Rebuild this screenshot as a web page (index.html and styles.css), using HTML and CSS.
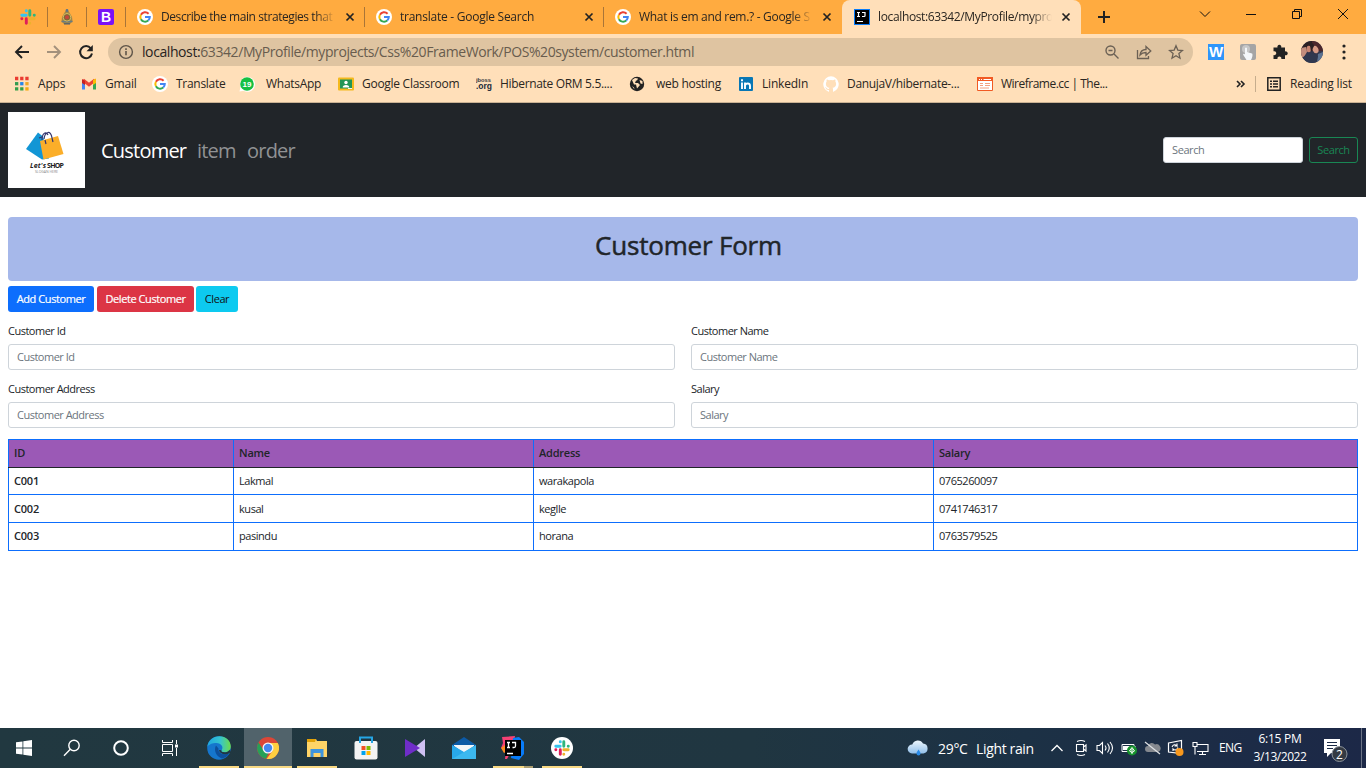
FILE: index.html
```html
<!DOCTYPE html>
<html lang="en">
<head>
<meta charset="utf-8">
<title>Customer</title>
<link rel="stylesheet" href="styles.css">
</head>
<body>
<svg class="defs" width="0" height="0">
  <defs>
    <symbol id="google" viewBox="0 0 16 16"><circle cx="8" cy="8" r="8" fill="#fff"/><path d="M3.9 5.8A4.8 4.8 0 0 1 11.6 4.7" fill="none" stroke="#ea4335" stroke-width="2"/><path d="M3.9 5.8A4.8 4.8 0 0 0 3.9 10.3" fill="none" stroke="#fbbc05" stroke-width="2"/><path d="M3.9 10.3A4.8 4.8 0 0 0 11.2 11.5" fill="none" stroke="#34a853" stroke-width="2"/><path d="M11.2 11.5A4.8 4.8 0 0 0 12.8 8H8" fill="none" stroke="#4285f4" stroke-width="2"/></symbol>
    <symbol id="slack" viewBox="0 0 16 16"><g stroke-width="2.9" stroke-linecap="round"><path d="M6.3 1.8v.1M1.8 6.3h4.4" stroke="#36c5f0"/><path d="M9.8 1.8v4.4M14.2 6.3h.1" stroke="#2eb67d"/><path d="M9.8 9.8h4.4M9.8 14.2v.1" stroke="#ecb22e"/><path d="M6.3 9.8v4.4M1.8 9.8h.1" stroke="#e01e5a"/></g></symbol>
    <symbol id="close" viewBox="0 0 10 10"><path d="M1.500 1.500l7 7M8.500 1.500l-7 7" stroke="#222" stroke-width="1.700"/></symbol>
  </defs>
</svg>

<header class="browser">
  <div class="tabs">
    <div class="pin"><svg width="16" height="16"><use href="#slack"/></svg></div>
    <div class="pin"><svg width="16" height="16" viewBox="0 0 16 16"><path d="M5 4.500L6.500 2h3L11 4.500 13 8l.5 4.500L11 15H5l-2.500-2.500L3 8z" fill="#a08747"/><path d="M2.500 12.500h11" stroke="#6b7b80" stroke-width="1.500"/><circle cx="8" cy="8.300" r="3.800" fill="#7f6a33" stroke="#d8bb60"/><circle cx="8" cy="8.300" r="2" fill="#c6463c"/><path d="M5 14.800h6" stroke="#5e6569" stroke-width="1.500"/><circle cx="8" cy="1.500" r="1.400" fill="#5e7384"/></svg></div>
    <div class="pin"><div class="boot">B</div></div>
    <div class="tab"><svg class="fav" width="16" height="16"><use href="#google"/></svg><span class="ttl t1">Describe the main strategies that</span><svg class="cl" width="10" height="10"><use href="#close"/></svg></div>
    <div class="tab"><svg class="fav" width="16" height="16"><use href="#google"/></svg><span class="ttl t2">translate - Google Search</span><svg class="cl" width="10" height="10"><use href="#close"/></svg></div>
    <div class="tab last"><svg class="fav" width="16" height="16"><use href="#google"/></svg><span class="ttl t3">What is em and rem.? - Google S</span><svg class="cl" width="10" height="10"><use href="#close"/></svg></div>
    <div class="tab active"><svg class="fav" width="16" height="16" viewBox="0 0 16 16"><path d="M0 0h16v16H0z" fill="#087cfa"/><path d="M1 1h14v14H1z" fill="#000"/><path d="M3 3.500h3M4.500 3.500v4M3 7.500h3M8 3.500h3v3.300q0 .7-.8.7H8M3 12.500h6" stroke="#fff" stroke-width="1.200" fill="none"/></svg><span class="ttl t4">localhost:63342/MyProfile/mypro</span><svg class="cl" width="10" height="10"><use href="#close"/></svg></div>
    <svg class="plus" width="14" height="14" viewBox="0 0 14 14"><path d="M7 1v12M1 7h12" stroke="#222" stroke-width="2"/></svg>
    <div class="win">
      <svg width="12" height="12" viewBox="0 0 12 12"><path d="M1 3.500l5 5 5-5" fill="none" stroke="#111"/></svg>
      <svg width="12" height="12" viewBox="0 0 12 12"><path d="M1 6.500h10" stroke="#111"/></svg>
      <svg width="12" height="12" viewBox="0 0 12 12"><path d="M1.500 3.500h7v7h-7zM3.500 3.500v-2h7v7h-2" fill="none" stroke="#111"/></svg>
      <svg width="12" height="12" viewBox="0 0 12 12"><path d="M1 1l10 10M11 1L1 11" stroke="#111"/></svg>
    </div>
  </div>
  <div class="toolbar">
    <svg width="16" height="16" viewBox="0 0 16 16"><path d="M15 8H2.500M8 2L2 8l6 6" fill="none" stroke="#222" stroke-width="1.900"/></svg>
    <svg width="16" height="16" viewBox="0 0 16 16"><path d="M1 8h12.500M8 2l6 6-6 6" fill="none" stroke="#a3917c" stroke-width="1.900"/></svg>
    <svg width="16" height="16" viewBox="0 0 16 16"><path d="M12.800 4.300A6 6 0 1 0 14 9.500" fill="none" stroke="#222" stroke-width="2"/><path d="M14.800 1v6.300H8.500z" fill="#222"/></svg>
    <div class="url">
      <svg width="16" height="16" viewBox="0 0 16 16"><circle cx="8" cy="8" r="6.400" fill="none" stroke="#5f5549" stroke-width="1.400"/><path d="M8 7v4.300M8 4.300v1.600" stroke="#5f5549" stroke-width="1.600"/></svg>
      <span class="addr"><b>localhost:</b>63342/MyProfile/myprojects/Css%20FrameWork/POS%20system/customer.html</span>
      <svg width="16" height="16" viewBox="0 0 16 16"><g fill="none" stroke="#6b6054" stroke-width="1.400"><circle cx="6.500" cy="6.500" r="4.500"/><path d="M10 10l4.500 4.500M4.500 6.500h4"/></g></svg>
      <svg width="16" height="16" viewBox="0 0 16 16"><g fill="none" stroke="#6b6054" stroke-width="1.300"><path d="M1.500 6v8.500h11V12"/><path d="M4 11c.5-4 2.800-5.500 6-5.500V2.500L14.800 7 10 11.300V8.500c-2.500 0-4.300.5-6 2.500z"/></g></svg>
      <svg width="16" height="16" viewBox="0 0 16 16"><path d="M8 1.800l1.800 4.300 4.700.4-3.600 3.100 1.100 4.600L8 11.700l-4 2.500 1.100-4.600-3.600-3.100 4.700-.4z" fill="none" stroke="#6b6054" stroke-width="1.300"/></svg>
    </div>
    <div class="ext">
      <span class="wbox">W</span>
      <svg width="16" height="16" viewBox="0 0 16 16"><rect width="16" height="16" rx="2" fill="#a5a5a5"/><circle cx="6" cy="5" r="4" fill="#c7c7c7"/><path d="M5 4q1-1 2 0v4l5 1.500c1 .5.500 4-1 6.500H6.500L3 10.500l1-1 1 1z" fill="#f4f7fa"/></svg>
      <svg width="16" height="16" viewBox="0 0 16 16"><path d="M1.500 3.500h4a2 2 0 1 1 3.700 0h3.800v4a2 2 0 1 1 0 3.700v3.800H9.300a2 2 0 1 0-3.800 0h-4v-4a2 2 0 1 0 0-3.700z" fill="#222"/></svg>
      <svg width="22" height="22" viewBox="0 0 22 22"><clipPath id="av"><circle cx="11" cy="11" r="11"/></clipPath><g clip-path="url(#av)"><path d="M0 0h22v22H0z" fill="#35364b"/><path d="M0 0h12v8H0z" fill="#2b2023"/><path d="M11 0h11v10H11z" fill="#4b272c"/><path d="M0 7l5-1 1 5-3 5H0z" fill="#c48d7c"/><ellipse cx="14.500" cy="8.500" rx="2.800" ry="3.800" fill="#d69a85" transform="rotate(-25 14.500 8.500)"/><ellipse cx="7.800" cy="8" rx="2.300" ry="3.200" fill="#c98470"/><path d="M9 4l3-2 1 3-3 6z" fill="#2b2023"/><path d="M17 13l5-2v11h-6z" fill="#5c7392"/><path d="M1 17l5-4 5-1 6 3-2 7H6z" fill="#30384f"/></g></svg>
      <svg width="4" height="16" viewBox="0 0 4 16"><path d="M2 2v.01M2 8v.01M2 14v.01" stroke="#222" stroke-width="3.200" stroke-linecap="round"/></svg>
    </div>
  </div>
  <div class="marks">
    <div class="mk" style="width:67px"><svg width="16" height="16" viewBox="0 0 16 16"><g stroke-width="3.300" stroke-dasharray="3.300 1.850"><path d="M1 2.500h13.700" stroke="#ea3b31"/><path d="M1 7.700h3.300" stroke="#349b50"/><path d="M6.150 7.700h3.300" stroke="#2585ec"/><path d="M11.300 7.700h3.300" stroke="#f2a623"/><path d="M1 12.900h8.500" stroke="#34a049"/><path d="M11.300 12.900h3.300" stroke="#f6a912"/></g></svg><span>Apps</span></div>
    <div class="mk" style="width:71px"><svg width="16" height="16" viewBox="0 0 16 16"><path d="M2.500 13.500V4" stroke="#4285f4" stroke-width="3"/><path d="M13.500 13.500V6" stroke="#34a853" stroke-width="3"/><path d="M2 4l6 4.800L14 4" fill="none" stroke="#ea4335" stroke-width="3.200"/><path d="M12 4l3-1.500V7l-3 2z" fill="#fbbc04"/><path d="M1 3l3 2v4L1 7z" fill="#c5221f"/></svg><span>Gmail</span></div>
    <div class="mk" style="width:87px"><svg width="16" height="16"><use href="#google"/></svg><span class="tr">Translate</span></div>
    <div class="mk wa" style="width:99px"><svg width="16" height="16" viewBox="0 0 16 16"><path d="M.5 15.500l1-4.500A7.500 7.500 0 1 1 4.600 14.700z" fill="#fff"/><circle cx="8" cy="8" r="6.800" fill="#15c043"/><text x="8" y="11" text-anchor="middle" class="n19">19</text></svg><span>WhatsApp</span></div>
    <div class="mk" style="width:138px"><svg width="16" height="16" viewBox="0 0 16 16"><rect y="1.500" width="16" height="13" rx="1" fill="#f4b91d"/><path d="M2 3.500h12v9H2z" fill="#219557"/><circle cx="8" cy="6.500" r="1.700" fill="#fff"/><path d="M4.700 11.500q0-2.600 3.300-2.600t3.300 2.600z" fill="#fff"/><path d="M10 12h4v1h-4z" fill="#f4f4f4"/></svg><span class="cr">Google Classroom</span></div>
    <div class="mk" style="width:153px"><svg width="16" height="16" viewBox="0 0 16 16"><text x="0" y="5.500" class="jb1" textLength="15" lengthAdjust="spacingAndGlyphs">jboss</text><text x="0" y="13" class="jb2" textLength="16" lengthAdjust="spacingAndGlyphs">.org</text></svg><span class="hib">Hibernate ORM 5.5....</span></div>
    <div class="mk web" style="width:110px"><svg width="16" height="16" viewBox="0 0 16 16"><circle cx="8" cy="8" r="7.200" fill="#222"/><path d="M3 4l3-2 3 .5-1 2H7l-1 2.500h3l2 2-3 3.500-1-4H5zM10.500 4l3 1v3l-2-.5zM3 10l2 1.500.5 2z" fill="#ffdfb9"/></svg><span>web hosting</span></div>
    <div class="mk li" style="width:84px"><svg width="14" height="14" viewBox="0 0 14 14"><rect width="14" height="14" rx="1" fill="#0877b5"/><path d="M3 5.500V12M3 2.300v2M6 12V5.500M6 8.500Q6.500 6.500 8.700 6.500T11 8.800V12" stroke="#fff" stroke-width="1.900" fill="none"/></svg><span>LinkedIn</span></div>
    <div class="mk" style="width:154px"><svg width="16" height="16" viewBox="0 0 16 16"><path d="M8 .3a8 8 0 0 0-2.500 15.500c.4.1.5-.2.5-.4v-1.500c-2.200.5-2.700-.9-2.700-.9-.5-1-1-1.300-1-1.300-.7-.5.1-.5.1-.5.800.1 1.300.9 1.300.9.700 1.200 1.900.9 2.300.7 0-.5.300-.9.500-1.100-1.800-.2-3.600-.9-3.600-4 0-.9.300-1.600.8-2.100-.1-.2-.4-1 .1-2.100 0 0 .7-.2 2.200.8a7.500 7.500 0 0 1 4 0c1.500-1 2.200-.8 2.200-.8.500 1.100.2 1.900.1 2.100.5.500.8 1.200.8 2.100 0 3.100-1.800 3.800-3.600 4 .3.200.5.700.5 1.500v2.200c0 .2.100.5.500.4A8 8 0 0 0 8 .3z" fill="#fff"/></svg><span class="dan">DanujaV/hibernate-...</span></div>
    <div class="mk" style="width:200px"><svg width="16" height="16" viewBox="0 0 16 16"><path d="M.5 1.500h15v13H.5z" fill="#fff" stroke="#f15a24"/><path d="M0 1h16v4H0z" fill="#f15a24"/><path d="M2 3.500h1M4 3.500h1M6.500 3.500H14" stroke="#fff"/><path d="M3 7.500h3M3 9.500h3M3 12h9M8 7.500h5M8 9.500h5" stroke="#f3a181"/></svg><span class="wf">Wireframe.cc | The...</span></div>
    <div class="right"><svg width="10" height="8" viewBox="0 0 10 8"><path d="M1 1l3 3-3 3M5 1l3 3-3 3" fill="none" stroke="#222" stroke-width="1.600"/></svg><i></i><svg width="14" height="14" viewBox="0 0 14 14"><path d="M.8.8h12.400v12.400H.8z" fill="none" stroke="#222" stroke-width="1.500"/><path d="M3 4.300h2M6 4.300h5M3 7h2M6 7h5M3 9.700h2M6 9.700h5" stroke="#222" stroke-width="1.400"/></svg><span>Reading list</span></div>
  </div>
</header>

<nav class="navbar">
  <svg class="logo" width="77" height="76" viewBox="0 0 77 76"><path d="M0 0h77v76H0z" fill="#fff"/><path d="M30 20.500l5 4 6 22-7 1-16-10.500z" fill="#1296d5"/><path d="M32 29l18-5 5.500 18-20 5.500z" fill="#fbae29"/><path d="M34 28c0-7 4-9 6-5M36 27c1-8 7-9 8-1" fill="none" stroke="#34366f" stroke-width="1.200"/><path d="M31 26l3-1M37 28l1 4M44 26l1 4" stroke="#34366f" stroke-width="1.200"/><text x="22" y="56" class="lg1" textLength="16">Let's</text><text x="39" y="56" class="lg2" textLength="17">SHOP</text><text x="27" y="60.500" class="lg3" textLength="23">SLOGAN HERE</text></svg>
  <a class="on">Customer</a><a class="it">item</a><a class="or">order</a>
  <input class="ctl srch" placeholder="Search"><button class="btn out">Search</button>
</nav>

<main class="page">
  <h2 class="banner"><span>Customer Form</span></h2>
  <div class="btns"><button class="btn add">Add Customer</button><button class="btn del">Delete Customer</button><button class="btn clr">Clear</button></div>
  <form class="grid">
    <label>Customer Id<input class="ctl" placeholder="Customer Id"></label>
    <label>Customer Name<input class="ctl" placeholder="Customer Name"></label>
    <label>Customer Address<input class="ctl" placeholder="Customer Address"></label>
    <label>Salary<input class="ctl" placeholder="Salary"></label>
  </form>
  <table>
    <colgroup><col class="c1"><col class="c2"><col class="c3"><col></colgroup>
    <thead><tr><th>ID</th><th>Name</th><th>Address</th><th>Salary</th></tr></thead>
    <tbody>
      <tr class="short"><th>C001</th><td>Lakmal</td><td>warakapola</td><td>0765260097</td></tr>
      <tr><th>C002</th><td>kusal</td><td>keglle</td><td>0741746317</td></tr>
      <tr class="end"><th>C003</th><td>pasindu</td><td>horana</td><td>0763579525</td></tr>
    </tbody>
  </table>
</main>

<footer class="taskbar">
  <div class="sys">
    <svg width="16" height="16" viewBox="0 0 16 16"><path d="M0 2.300l6.500-.9v6.200H0zM7.300 1.300L16 0v7.600H7.300zM0 8.400h6.500v6.200L0 13.700zM7.300 8.400H16V16l-8.700-1.300z" fill="#fff"/></svg>
    <svg width="18" height="18" viewBox="0 0 18 18"><circle cx="11" cy="6.500" r="5.200" fill="none" stroke="#fff" stroke-width="1.400"/><path d="M7.300 10.300L1 16.700" stroke="#fff" stroke-width="1.400"/></svg>
    <svg width="18" height="18" viewBox="0 0 18 18"><circle cx="9" cy="9" r="6.800" fill="none" stroke="#fff" stroke-width="2"/></svg>
    <svg width="18" height="18" viewBox="0 0 18 18"><path d="M1.500 5.500h10v7h-10zM1.500 1v2.500h10V1M1.500 17v-2.500h10V17M15.500 1v4M15.500 9v8" fill="none" stroke="#fff"/><path d="M14 5.500h3v3h-3z" fill="#fff"/></svg>
  </div>
  <div class="apps">
    <div class="app run"><svg width="24" height="24" viewBox="0 0 24 24"><defs><linearGradient id="eg" x1="0" x2="1"><stop offset="0" stop-color="#1fa6e0"/><stop offset=".55" stop-color="#35c4cf"/><stop offset="1" stop-color="#6ddc4a"/></linearGradient></defs><circle cx="12" cy="12" r="11.800" fill="#1576cd"/><path d="M.3 11C1 4.500 6 .2 12.500.2c6.500 0 11.300 4.800 11.300 10.100 0 4-3 6-6.300 6-2.500 0-3.600-1-3-2 2.500-3.300-.5-7.300-5-7.300C5.500 7 1.500 8.500.3 11z" fill="url(#eg)"/><path d="M9 9.500c-2.500 4.500 0 11 6 13 3-.5 6-2.500 7.500-5.500-5 3-12 .5-11-4.500z" fill="#0d4f9c"/><path d="M14.500 14.300c-.6 1 .5 2 3 2 2 0 4-.9 5.300-2.600l.8 2.300-1.100 1c-4 2.500-10 1-10.500-3z" fill="#213841"/></svg></div>
    <div class="app run cur"><svg width="22" height="22" viewBox="0 0 22 22"><circle cx="11" cy="11" r="11" fill="#dc4637"/><path d="M1.500 5.500L7 14l5 1-3 6.800A11 11 0 0 1 1.500 5.500z" fill="#27a058"/><path d="M11 6h9.800A11 11 0 0 1 9.500 21.900L15.500 14z" fill="#ffcf40"/><circle cx="11" cy="11" r="5.500" fill="#f6f6f6"/><circle cx="11" cy="11" r="4.200" fill="#4587f0"/></svg></div>
    <div class="app run"><svg width="22" height="20" viewBox="0 0 22 20"><path d="M1 1h9l1 2h10v16H1z" fill="#ffd467"/><path d="M1 1h9l-1 3H1z" fill="#e3a208"/><path d="M4.500 19v-8h13v8h-3v-4h-7v4z" fill="#3d94dd"/></svg></div>
    <div class="app"><svg width="24" height="24" viewBox="0 0 24 24"><rect x=".5" y="5" width="23" height="18.500" rx="2" fill="#f3f3f3"/><path d="M6 7V1.500h12V7" fill="none" stroke="#25a6e5" stroke-width="2"/><path d="M7.500 10h4v4h-4z" fill="#f25022"/><path d="M12.500 10h4v4h-4z" fill="#7fba00"/><path d="M7.500 15h4v4h-4z" fill="#00a4ef"/><path d="M12.500 15h4v4h-4z" fill="#ffb900"/></svg></div>
    <div class="app"><svg width="22" height="20" viewBox="0 0 22 20"><path d="M21 1v18L10 10z" fill="#cfc0f3"/><path d="M1 1l15 9L1 19z" fill="#6f2dc9"/></svg></div>
    <div class="app"><svg width="24" height="24" viewBox="0 0 24 24"><path d="M0 9l12-8 12 8v5H0z" fill="#0c5aa6"/><path d="M2 9h20v1l-10 7L2 10z" fill="#f2f5f8"/><path d="M0 9l12 7 12-7v14H0z" fill="#28a8ea"/><path d="M0 23l24-14v14z" fill="#50c7f3" opacity=".5"/></svg></div>
    <div class="app run ij"><svg width="24" height="24" viewBox="0 0 24 24"><path d="M1 1l13-1-2 12-6 11H4l1-8-5-3 2-5z" fill="#f64174"/><path d="M0 12l4-3 3 6-4 2z" fill="#fc8b21"/><path d="M12 2l6-1 5 5v12l-5 6-8-2z" fill="#087cfa"/><path d="M4 4h16v16H4z" fill="#000"/><path d="M6 6.500h3M7.500 6.500v5M6 11.500h3M11 6.500h3.500V10q0 1.500-1.500 1.500h-1.500M6 17.500h6" stroke="#fff" stroke-width="1.300" fill="none"/></svg></div>
    <div class="app run"><svg width="22" height="22" viewBox="0 0 22 22"><circle cx="11" cy="11" r="11" fill="#fff"/><svg x="3" y="3" width="16" height="16"><use href="#slack"/></svg></svg></div>
  </div>
  <div class="tray">
    <svg class="cloud" width="22" height="18" viewBox="0 0 22 18"><defs><linearGradient id="cg" y2="1" x2="0"><stop stop-color="#edf6fc"/><stop offset="1" stop-color="#91bfe9"/></linearGradient></defs><path d="M5 14.500a4.500 4.500 0 0 1 .3-9A5.800 5.800 0 0 1 16 4.600a5 5 0 0 1 .5 9.900z" fill="url(#cg)"/><path d="M11.500 10.500c1.500 2.300 2 3.200 2 4a2 2 0 0 1-4 0c0-.8.5-1.700 2-4z" fill="#298be8"/></svg>
    <span class="deg">29°C</span><span class="rain">Light rain</span>
    <svg class="up" width="14" height="10" viewBox="0 0 14 10"><path d="M1.500 8L7 2.500 12.500 8" fill="none" stroke="#fff" stroke-width="1.300"/></svg>
    <svg class="cam" width="14" height="18" viewBox="0 0 14 18"><path d="M2.500 5.500h7v7h-7zM9.500 8l2.500-2v6l-2.500-2M3 2.500q4-2 8 0M3 15.500q4 2 8 0" fill="none" stroke="#fff" stroke-width="1.100"/></svg>
    <svg class="vol" width="18" height="16" viewBox="0 0 18 16"><path d="M1 5.500h2.500l3-3v11l-3-3H1zM9 5.500q2 2.500 0 5M11.500 3.500q3.500 4.500 0 9M14 2q5 6 0 12" fill="none" stroke="#fff" stroke-width="1.100"/></svg>
    <svg class="bat" width="17" height="16" viewBox="0 0 17 16"><path d="M1 4.500h12v7H1zM14 6v4" fill="none" stroke="#fff"/><path d="M2 6h8v4H2z" fill="#fff"/><circle cx="11" cy="10.500" r="5" fill="#16922c"/><path d="M8.500 11l2.500-3.500 2.500 3.500q-2.500 3-5 0M11 9v5" fill="none" stroke="#fff"/></svg>
    <svg class="off" width="17" height="16" viewBox="0 0 17 16"><path d="M4 12a3 3 0 0 1 0-6 4 4 0 0 1 7-1.500 4 4 0 0 1 3 7.500z" fill="#85898f"/><path d="M1 2l15 12" stroke="#dfe2e5" stroke-width="1.200"/></svg>
    <svg class="upd" width="18" height="18" viewBox="0 0 18 18"><path d="M1.500 4l13-2.500v13l-13-1.500z" fill="none" stroke="#fff" stroke-width="1.200"/><path d="M5 8q2-4 5-1V4.500M10 7H7.500M11 8.500q-2 4-5 1.500V12" fill="none" stroke="#fff" stroke-width="1.100"/><circle cx="12.500" cy="13" r="4" fill="#f8981d"/></svg>
    <svg class="net" width="17" height="16" viewBox="0 0 17 16"><path d="M5 4.500h11v7H5M10.500 12v2.500M7 14.500h7M1 2.500h4v4H1zM3 6.500v8" fill="none" stroke="#fff" stroke-width="1.100"/></svg>
    <span class="eng">ENG</span>
    <div class="clock"><span>6:15 PM</span><span class="date">3/13/2022</span></div>
    <svg class="note" width="26" height="26" viewBox="0 0 26 26"><path d="M1 1h16v14H8l-4 4v-4H1z" fill="#fff"/><path d="M4 4.500h10M4 7.500h10M4 10.500h6" stroke="#1b2b47" stroke-width="1.100"/><circle cx="16.500" cy="16" r="7.500" fill="#343a43" stroke="#8d949c"/><text x="16.500" y="20.500" text-anchor="middle" class="n2">2</text></svg>
    <i class="edge"></i>
  </div>
</footer>
</body>
</html>
```
FILE: styles.css
```css
*{box-sizing:border-box}
body{margin:0;width:1366px;height:768px;overflow:hidden;display:flex;flex-direction:column;background:#fff;color:#212529;font:12px/16px "Open Sans","Noto Sans",sans-serif}
svg{display:block;flex:none}
.defs{position:absolute}
span,a,button,label,b{white-space:nowrap}
.browser{height:103px;background:#ffdfb9;border-bottom:1px solid #c9b193;color:#2a2621}
.tabs{height:34px;display:flex;align-items:center;background:#ffab40;padding-left:9px}
.pin{width:39px;height:20px;border-right:1px solid #a97538;display:flex;align-items:center;justify-content:center}
.boot{width:16px;height:16px;border-radius:2px;background:#7a12f7;color:#fff;font:700 14px/16px "Liberation Sans",sans-serif;text-align:center}
.tab{flex:none;width:239px;height:20px;border-right:1px solid #a97538;display:flex;align-items:center;padding:0 9px 0 11px}
.tab .ttl{width:175px;margin:0 9px 0 8px;overflow:hidden;letter-spacing:-.25px;mask-image:linear-gradient(90deg,#000 88%,transparent)}
.tab .t1{letter-spacing:-.42px}
.tab .t3{letter-spacing:-.3px;width:174px}
.tab .t4{letter-spacing:-.36px;width:174px}
.tab.last{border:0;width:238px}
.tab.active{height:34px;border:0;background:#ffdfb9;border-radius:8px 8px 0 0;padding-left:12px}
.plus{margin-left:16px}
.win{display:flex;gap:34px;margin:-6px 0 0 auto;padding-right:17px}
.toolbar{height:36px;display:flex;align-items:center;padding:0 0 0 14px}
.toolbar>svg{margin-right:16px}
.url{width:1085px;height:28px;border-radius:14px;background:#dfc4a1;display:flex;align-items:center;gap:16px;padding:0 9px 0 10px;margin-left:-2px}
.addr{flex:1;margin-left:-8px;font-size:14px;letter-spacing:-.41px;color:#685c4e}
.addr b{font-weight:400;color:#28231e}
.ext{display:flex;align-items:center;gap:16px;margin-left:15px}
.ext svg:nth-child(4){margin-left:-3px}
.ext svg:nth-child(5){margin-left:3px}
.wbox{width:16px;height:16px;background:#2f95fa;color:#fff;font:700 15px/16px "Liberation Sans",sans-serif;text-align:center;overflow:hidden}
.marks{height:28px;display:flex;align-items:center;padding-left:14px}
.mk{display:flex;align-items:center;flex:none;gap:8px;letter-spacing:-.2px}
.mk span{margin-top:-1px}
.wa,.web{gap:11px}
.li{gap:9px}
.tr,.wa,.cr,.web{letter-spacing:-.28px}
.hib{letter-spacing:-.33px}
.dan{letter-spacing:-.32px}
.wf{letter-spacing:-.5px}
.n19{font:700 8px "Liberation Sans",sans-serif;fill:#fff;letter-spacing:0}
.jb1{font:700 6px "Liberation Sans",sans-serif;fill:#35383c;letter-spacing:0}
.jb2{font:700 9px "Liberation Sans",sans-serif;fill:#202a39;letter-spacing:0}
.right{display:flex;align-items:center;margin-left:59px;letter-spacing:-.2px}
.right i{width:1px;height:16px;background:#c6ad8d;margin:0 11px 0 9px}
.right span{margin:-1px 0 0 9px}
.navbar{height:94px;background:#212529;display:flex;align-items:center;padding:0 8px}
.navbar a{font-size:20px;line-height:28px;padding-top:2px;letter-spacing:-.78px;color:#909294;margin-right:11px}
.navbar .on{color:#fff;margin-left:16px;width:85px}
.navbar .it{width:39px}
.navbar .or{width:48px}
.lg1{font:italic 700 7px "Open Sans",sans-serif;fill:#222}
.lg2{font:700 7px "Open Sans",sans-serif;fill:#222}
.lg3{font:3.500px "Open Sans",sans-serif;fill:#888}
.ctl{display:block;width:100%;height:26px;border:1px solid #ced4da;border-radius:3px;padding:0 8px 2px;background:#fff;font:11px/16px "Open Sans",sans-serif;letter-spacing:-.5px;color:#212529}
.ctl::placeholder{color:#6c757d;opacity:1}
.srch{width:140px;margin:0 6px 0 auto;letter-spacing:-.4px}
.btn{height:26px;border:0;border-radius:3px;padding:0;font:11px/16px "Open Sans",sans-serif;letter-spacing:-.42px;color:#fff;text-align:center}
.out{width:49px;background:transparent;border:1px solid #198754;color:#198754}
.page{padding:20px 8px 0;height:531px}
.banner{height:64px;margin:0;border-radius:4px;background:#a6b8ea;text-align:center;font-size:26px;font-weight:400;line-height:57px;padding-left:11px;letter-spacing:-.2px;-webkit-text-stroke:.5px #212529}
.btns{display:flex;margin-top:5px}
.add,.del{-webkit-text-stroke:.2px #fff}
.add{width:86px;background:#0d6efd;margin-right:3px}
.del{width:97px;background:#dc3545;margin-right:2px}
.clr{width:42px;background:#0dcaf0;color:#111}
.grid{display:grid;grid-template-columns:1fr 1fr;gap:8px 16px;margin-top:8px}
.grid label{height:50px;font-size:11px;line-height:22px;letter-spacing:-.5px}
.grid .ctl{margin-top:2px}
table{width:1350px;margin-top:11px;border-collapse:collapse;table-layout:fixed;font-size:11px;line-height:16px;letter-spacing:-.45px}
.c1{width:225px}.c2{width:300px}.c3{width:400px}
th,td{height:28px;padding:0 5px;text-align:left;border:1px solid #0d6efd}
.short>*{height:27px}
thead th,.end>*{padding-bottom:2px}
thead th{background:#9b59b6;border-bottom-color:#212529;height:28px}
th{font-weight:600;letter-spacing:-.22px}
.taskbar{height:40px;display:flex;color:#fff;background:linear-gradient(90deg,#213840,#203641 55%,#1c3145 75%,#1c2847)}
.sys{display:flex;width:195px;align-items:center;padding-right:1px}
.sys svg{margin:auto}
.apps{display:flex;gap:1px}
.app{width:48px;height:40px;display:flex;align-items:center;justify-content:center}
.run{background:linear-gradient(#f8d983,#f8d983) center bottom/40px 2px no-repeat}
.cur{background:linear-gradient(#f8d983,#f8d983) center bottom/48px 2px no-repeat,#51636b}
.ij{background:linear-gradient(90deg,#f8d983 31px,#ac9e70 31px) center bottom/40px 2px no-repeat}
.tray{display:flex;align-items:center;margin-left:auto;width:459px}
.deg{font-size:14px;margin:2px 0 0 9px;width:38px;letter-spacing:-.3px}
.rain{font-size:14px;margin-top:2px;width:68px;letter-spacing:-.35px}
.up{margin-left:6px}.cam{margin-left:10px}.vol{margin-left:8px}.bat{margin-left:7px}.off{margin-left:6px}.upd{margin-left:6px}.net{margin-left:7px}
.eng{margin-left:10px;width:24px;letter-spacing:-.6px}
.clock{width:62px;margin-left:6px;display:flex;flex-direction:column;align-items:center;line-height:18px;letter-spacing:-.25px}
.date{letter-spacing:-.45px}
.note{margin:5px 0 0 12px}
.n2{font:12px "Open Sans",sans-serif;fill:#fff}
.edge{width:1px;height:40px;margin-left:auto;margin-right:4px;background:#6b7385}
```
